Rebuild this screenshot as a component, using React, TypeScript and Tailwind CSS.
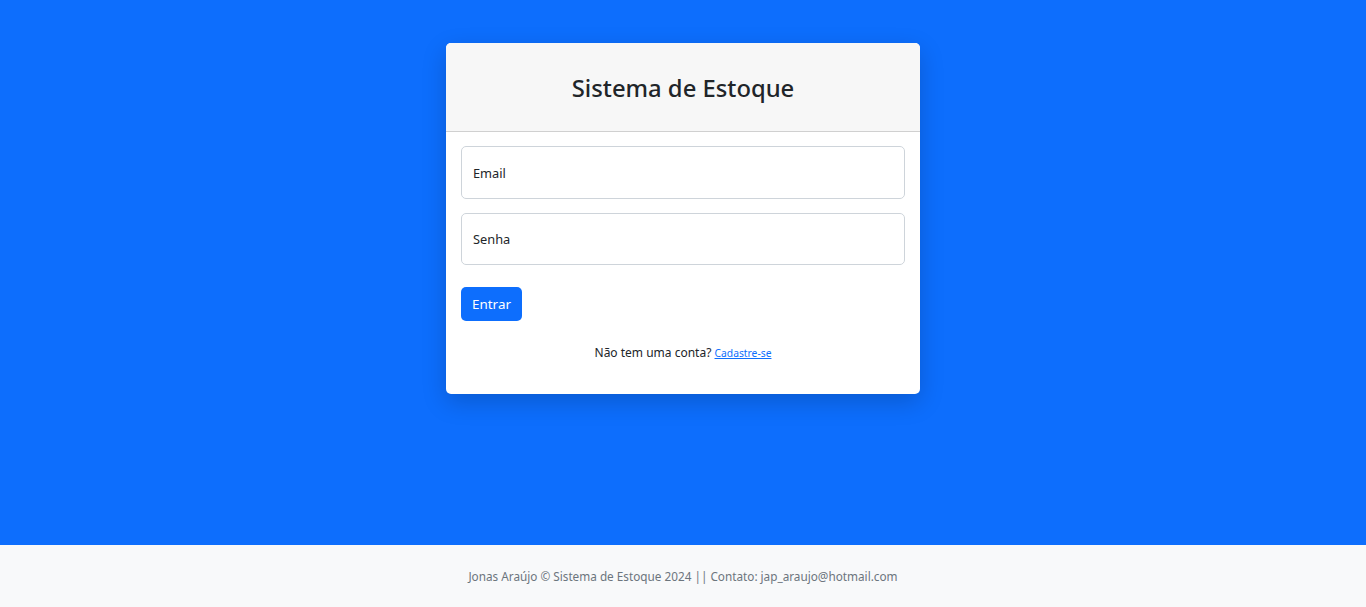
export default function App() {
  return (
    <div className="min-h-[607px] flex flex-col bg-[#0d6efd]" style={{ fontFamily: '"Noto Sans", "Open Sans", sans-serif' }}>
      <main className="flex-1 flex justify-center pt-[43px]">
        <div className="w-[474px] h-[351px] bg-white rounded-[5px] shadow-[0_8px_24px_rgba(0,0,0,0.18)] overflow-hidden flex flex-col">
          <div className="h-[89px] bg-[#f7f7f7] border-b border-[#d0d0d0] flex items-center justify-center pt-[3px]">
            <h3 className="text-[23.8px] font-medium text-[#212529] leading-none">Sistema de Estoque</h3>
          </div>
          <form className="px-[15px] pt-[14px] flex flex-col">
            <div className="h-[53px] border border-[#ced4da] rounded-[5px] flex items-center px-[11px] text-[12.8px] text-[#212529] pt-[2px]">
              Email
            </div>
            <div className="mt-[14px] h-[52px] border border-[#ced4da] rounded-[5px] flex items-center px-[11px] text-[12.8px] text-[#212529] pt-[1px]">
              Senha
            </div>
            <div className="mt-[22px]">
              <button type="button" className="h-[34px] w-[61px] bg-[#0d6efd] text-white text-[13.4px] rounded-[5px]">Entrar</button>
            </div>
            <p className="mt-[23px] text-center text-[12px] text-[#212529]">
              Não tem uma conta? <a href="#" className="text-[10.3px] text-[#0d6efd] underline">Cadastre-se</a>
            </p>
          </form>
        </div>
      </main>
      <footer className="h-[62px] bg-[#f8f9fa] flex items-center justify-center text-[11.75px] text-[#6c757d] pt-[1px]">
        Jonas Araújo © Sistema de Estoque 2024 || Contato: jap_araujo@hotmail.com
      </footer>
    </div>
  )
}
